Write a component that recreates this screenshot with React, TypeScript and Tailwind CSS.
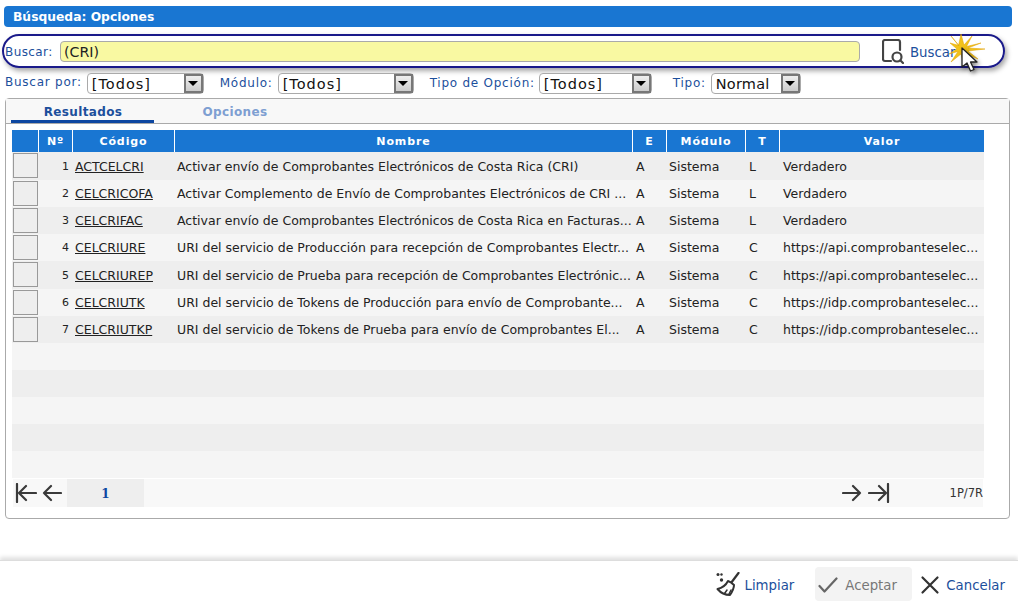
const rows = [
  { code: 'ACTCELCRI', name: 'Activar envío de Comprobantes Electrónicos de Costa Rica (CRI)', type: 'L', value: 'Verdadero' },
  { code: 'CELCRICOFA', name: 'Activar Complemento de Envío de Comprobantes Electrónicos de CRI ...', type: 'L', value: 'Verdadero' },
  { code: 'CELCRIFAC', name: 'Activar envío de Comprobantes Electrónicos de Costa Rica en Facturas...', type: 'L', value: 'Verdadero' },
  { code: 'CELCRIURE', name: 'URI del servicio de Producción para recepción de Comprobantes Electr...', type: 'C', value: 'https://api.comprobanteselec...' },
  { code: 'CELCRIUREP', name: 'URI del servicio de Prueba para recepción de Comprobantes Electrónic...', type: 'C', value: 'https://api.comprobanteselec...' },
  { code: 'CELCRIUTK', name: 'URI del servicio de Tokens de Producción para envío de Comprobante...', type: 'C', value: 'https://idp.comprobanteselec...' },
  { code: 'CELCRIUTKP', name: 'URI del servicio de Tokens de Prueba para envío de Comprobantes El...', type: 'C', value: 'https://idp.comprobanteselec...' },
]

const cols = 'grid grid-cols-[27px_34px_102px_458px_34px_79px_34px_204px]'

function Select({ value, width, tight }: { value: string; width: string; tight?: boolean }) {
  return (
    <div className={`flex h-[21px] items-center justify-between rounded-sm border border-[#aaa] bg-white pl-[4px] text-[14.5px] text-[#111] ${tight ? 'tracking-[0.2px]' : 'tracking-[1px]'} ${width}`}>
      <span className="pt-[2px]">{value}</span>
      <span className="flex h-[19px] w-[19px] items-center justify-center border-2 border-[#777] bg-gradient-to-b from-[#eee] to-[#ccc]">
        <span className="h-0 w-0 border-x-[5px] border-t-[5px] border-x-transparent border-t-black" />
      </span>
    </div>
  )
}

function Label({ children }: { children: string }) {
  return <span className="mb-[3px] text-[12px] tracking-[0.75px] text-[#1c4f9c]">{children}</span>
}

function SearchDoc() {
  return (
    <svg width="22" height="25" viewBox="0 0 22 25" fill="none" stroke="#444" strokeWidth="2.2" strokeLinecap="round">
      <path d="M9 22H3a2 2 0 0 1-2-2V3a2 2 0 0 1 2-2h13a2 2 0 0 1 2 2v8" />
      <circle cx="15" cy="18" r="4.500" />
      <path d="M18.500 21.500l2.500 2.500" />
    </svg>
  )
}

function Broom() {
  return (
    <svg width="24" height="24" viewBox="0 0 24 24" className="shrink-0">
      <path d="M22.500 1 15 11" stroke="#333" strokeWidth="2.200" strokeLinecap="round" />
      <path d="M12 9C10 13 6 16 1.500 17 4 20 9 23 14 23c2-3 4-7 4-10-2-2-4-3.500-6-4z" fill="#fff" stroke="#333" strokeWidth="2" strokeLinejoin="round" />
      <path d="M8.500 21.500 11 18M13 22l2-4" stroke="#333" strokeWidth="1.500" strokeLinecap="round" />
      <circle cx="2" cy="2.500" r="1.500" fill="#333" />
      <circle cx="5.500" cy="2.500" r="1.200" fill="#333" />
      <circle cx="5.500" cy="8" r="1.700" fill="#333" />
    </svg>
  )
}

function Spark() {
  return (
    <svg width="37" height="32" viewBox="0 0 37 32" className="absolute left-[948px] top-[34px]">
      <path d="M3 2 10.500 11.500 13 0l3 11L24 2l-5.500 10.500L33 9l-13 5 17 1-17 2 10 8-12-5-2 12-3-12-10 8 7-10.500L1 20l8-5-7-6 9 2.500z" fill="#f2c21a" stroke="#e0a000" strokeWidth="0.5" strokeLinejoin="round" />
    </svg>
  )
}

function Cursor() {
  return (
    <svg width="20" height="28" viewBox="0 0 20 28" className="absolute left-[960px] top-[47px] drop-shadow-[2px_2px_2px_rgba(0,0,0,0.45)]">
      <path d="M2 1v19l5-4 3.500 8 3.500-1.500L10.500 15H17z" fill="#fff" stroke="#222" strokeWidth="1.300" strokeLinejoin="round" />
    </svg>
  )
}

function PagerArrow({ d, w }: { d: string; w: number }) {
  return (
    <svg width={w} height="20" viewBox={`0 0 ${w} 20`} fill="none" stroke="#3a3a3a" strokeWidth="2.200" strokeLinecap="round" strokeLinejoin="round" className="shrink-0">
      <path d={d} />
    </svg>
  )
}

export default function App() {
  return (
    <div className="relative flex h-[607px] w-[1018px] flex-col overflow-hidden bg-white font-['DejaVu_Sans',sans-serif] text-[12.5px] text-[#222]">
      <div className="mx-[4px] mt-[6px] mr-[6px] flex h-[21px] items-center rounded-sm bg-[#1976d2] pl-[9px] pt-[1px] text-[12.3px] font-bold text-white">
        Búsqueda: Opciones
      </div>

      <div className="mt-[7px] ml-[2px] flex h-[34px] w-[1003px] items-center rounded-full border-2 border-[#1a1a8a] pl-[1px] shadow-[2px_3px_5px_rgba(0,0,0,0.35)]">
        <span className="w-[55px] pt-[2px] text-[12px] tracking-[0.4px] text-[#1c4f9c]">Buscar:</span>
        <div className="flex h-[21px] w-[800px] items-center rounded-sm border border-[#aaa] bg-[#f9f9a2] pl-[3px] pt-[3px] text-[14.2px] text-[#222]">(CRI)</div>
        <div className="ml-[22px] flex items-center gap-[6px] text-[#1c4f9c]">
          <SearchDoc />
          <span className="pt-[4px] text-[13.3px]">Buscar</span>
        </div>
      </div>

      <div className="mt-[5px] flex h-[21px] items-center pl-[5px]">
        <Label>Buscar por:</Label>
        <div className="ml-[5px]"><Select value="[Todos]" width="w-[117px]" /></div>
        <div className="ml-[16px]"><Label>Módulo:</Label></div>
        <div className="ml-[5px]"><Select value="[Todos]" width="w-[136px]" /></div>
        <div className="ml-[16px]"><Label>Tipo de Opción:</Label></div>
        <div className="ml-[4px]"><Select value="[Todos]" width="w-[113px]" /></div>
        <div className="ml-[21px]"><Label>Tipo:</Label></div>
        <div className="ml-[5px]"><Select value="Normal" width="w-[90px]" tight /></div>
      </div>

      <div className="mt-[4px] ml-[5px] flex h-[421px] w-[1005px] flex-col rounded-[4px] border border-[#aaa]">
        <div className="flex h-[25px] border-b border-[#aaa] bg-[#f8f8f8] text-[12px] font-bold tracking-[0.35px]">
          <div className="ml-[5px] flex w-[143px] justify-center border-b-[3px] border-[#0d47a1] pt-[4px] pl-[1px] text-[#1c4f9c]">Resultados</div>
          <div className="flex w-[161px] justify-center pt-[4px] pl-[1px] text-[#7e9fd2]">Opciones</div>
        </div>

        <div className="ml-[6px] mt-[6px] w-[972px]">
          <div className={`${cols} h-[22px] bg-[#1976d2] text-[11px] font-bold tracking-[0.9px] text-white`}>
            {['', 'Nº', 'Código', 'Nombre', 'E', 'Módulo', 'T', 'Valor'].map((h, i) => (
              <div key={i} className={`flex items-center justify-center pt-[2px] ${i < 7 ? 'border-r border-white' : ''}`}>{h}</div>
            ))}
          </div>
          {rows.map((r, i) => (
            <div key={r.code} className={`${cols} items-center pt-[2px] ${i === 0 || i === 4 ? 'h-[28px]' : 'h-[27px]'} ${i % 2 === 0 ? 'bg-[#eeeeee]' : 'bg-[#f5f5f5]'}`}>
              <div className={`ml-px h-[25px] w-[25px] self-start border border-[#999] bg-[#eeeeee] -mt-px`} />
              <div className="pr-[4px] text-right text-[11px]">{i + 1}</div>
              <div className="pl-[2px] underline">{r.code}</div>
              <div className="overflow-hidden whitespace-nowrap pl-[2px]">{r.name}</div>
              <div className="pl-[3px]">A</div>
              <div className="pl-[2px]">Sistema</div>
              <div className="pl-[3px]">{r.type}</div>
              <div className="overflow-hidden whitespace-nowrap pl-[3px]">{r.value}</div>
            </div>
          ))}
          {[0, 1, 2, 3, 4].map((i) => (
            <div key={i} className={`h-[27px] ${i % 2 === 0 ? 'bg-[#f5f5f5]' : 'bg-[#eeeeee]'}`} />
          ))}

          <div className="mt-px ml-px flex h-[28px] w-[970px] items-center bg-[#f8f8f8] pl-[2px] text-[#333]">
            <PagerArrow w={22} d="M2 1v18M21 10H4M11 3l-7 7 7 7" />
            <div className="ml-[5px]"><PagerArrow w={20} d="M19 10H2M9 3l-7 7 7 7" /></div>
            <div className="ml-[5px] flex h-[28px] w-[77px] items-center justify-center bg-[#eeeeee] pt-px font-['DejaVu_Serif',serif] text-[12px] font-bold text-[#0d47a1]">1</div>
            <div className="ml-[698px]"><PagerArrow w={20} d="M1 10h17M11 3l7 7-7 7" /></div>
            <div className="ml-[6px]"><PagerArrow w={22} d="M1 10h17M11 3l7 7-7 7M20 1v18" /></div>
            <span className="ml-auto pt-px text-[11.5px]">1P/7R</span>
          </div>
        </div>
      </div>

      <div className="mt-auto flex h-[47px] items-center justify-end border-t border-[#ddd] pr-[13px] text-[13.3px] text-[#1c4f9c] shadow-[0_-3px_4px_rgba(0,0,0,0.12)]">
        <div className="flex items-center gap-[5px]">
          <Broom />
          <span className="pt-[4px]">Limpiar</span>
        </div>
        <div className="ml-[21px] flex h-[34px] w-[97px] items-center gap-[7px] rounded-sm bg-[#f3f3f3] pl-[3px] text-[#777]">
          <svg width="20" height="16" viewBox="0 0 20 16" fill="none" stroke="#666" strokeWidth="2.200" strokeLinecap="round" strokeLinejoin="round" className="mt-[2px] shrink-0">
            <path d="M1.500 9l5 5.500L18.500 1.500" />
          </svg>
          <span className="pt-[4px]">Aceptar</span>
        </div>
        <div className="ml-[8px] flex items-center gap-[6px]">
          <svg width="20" height="20" viewBox="0 0 20 20" fill="none" stroke="#333" strokeWidth="2.200" strokeLinecap="round" className="mt-[2px] shrink-0">
            <path d="M2.500 2.500l15 15M17.500 2.500l-15 15" />
          </svg>
          <span className="pt-[4px]">Cancelar</span>
        </div>
      </div>

      <Spark />
      <Cursor />
    </div>
  )
}
